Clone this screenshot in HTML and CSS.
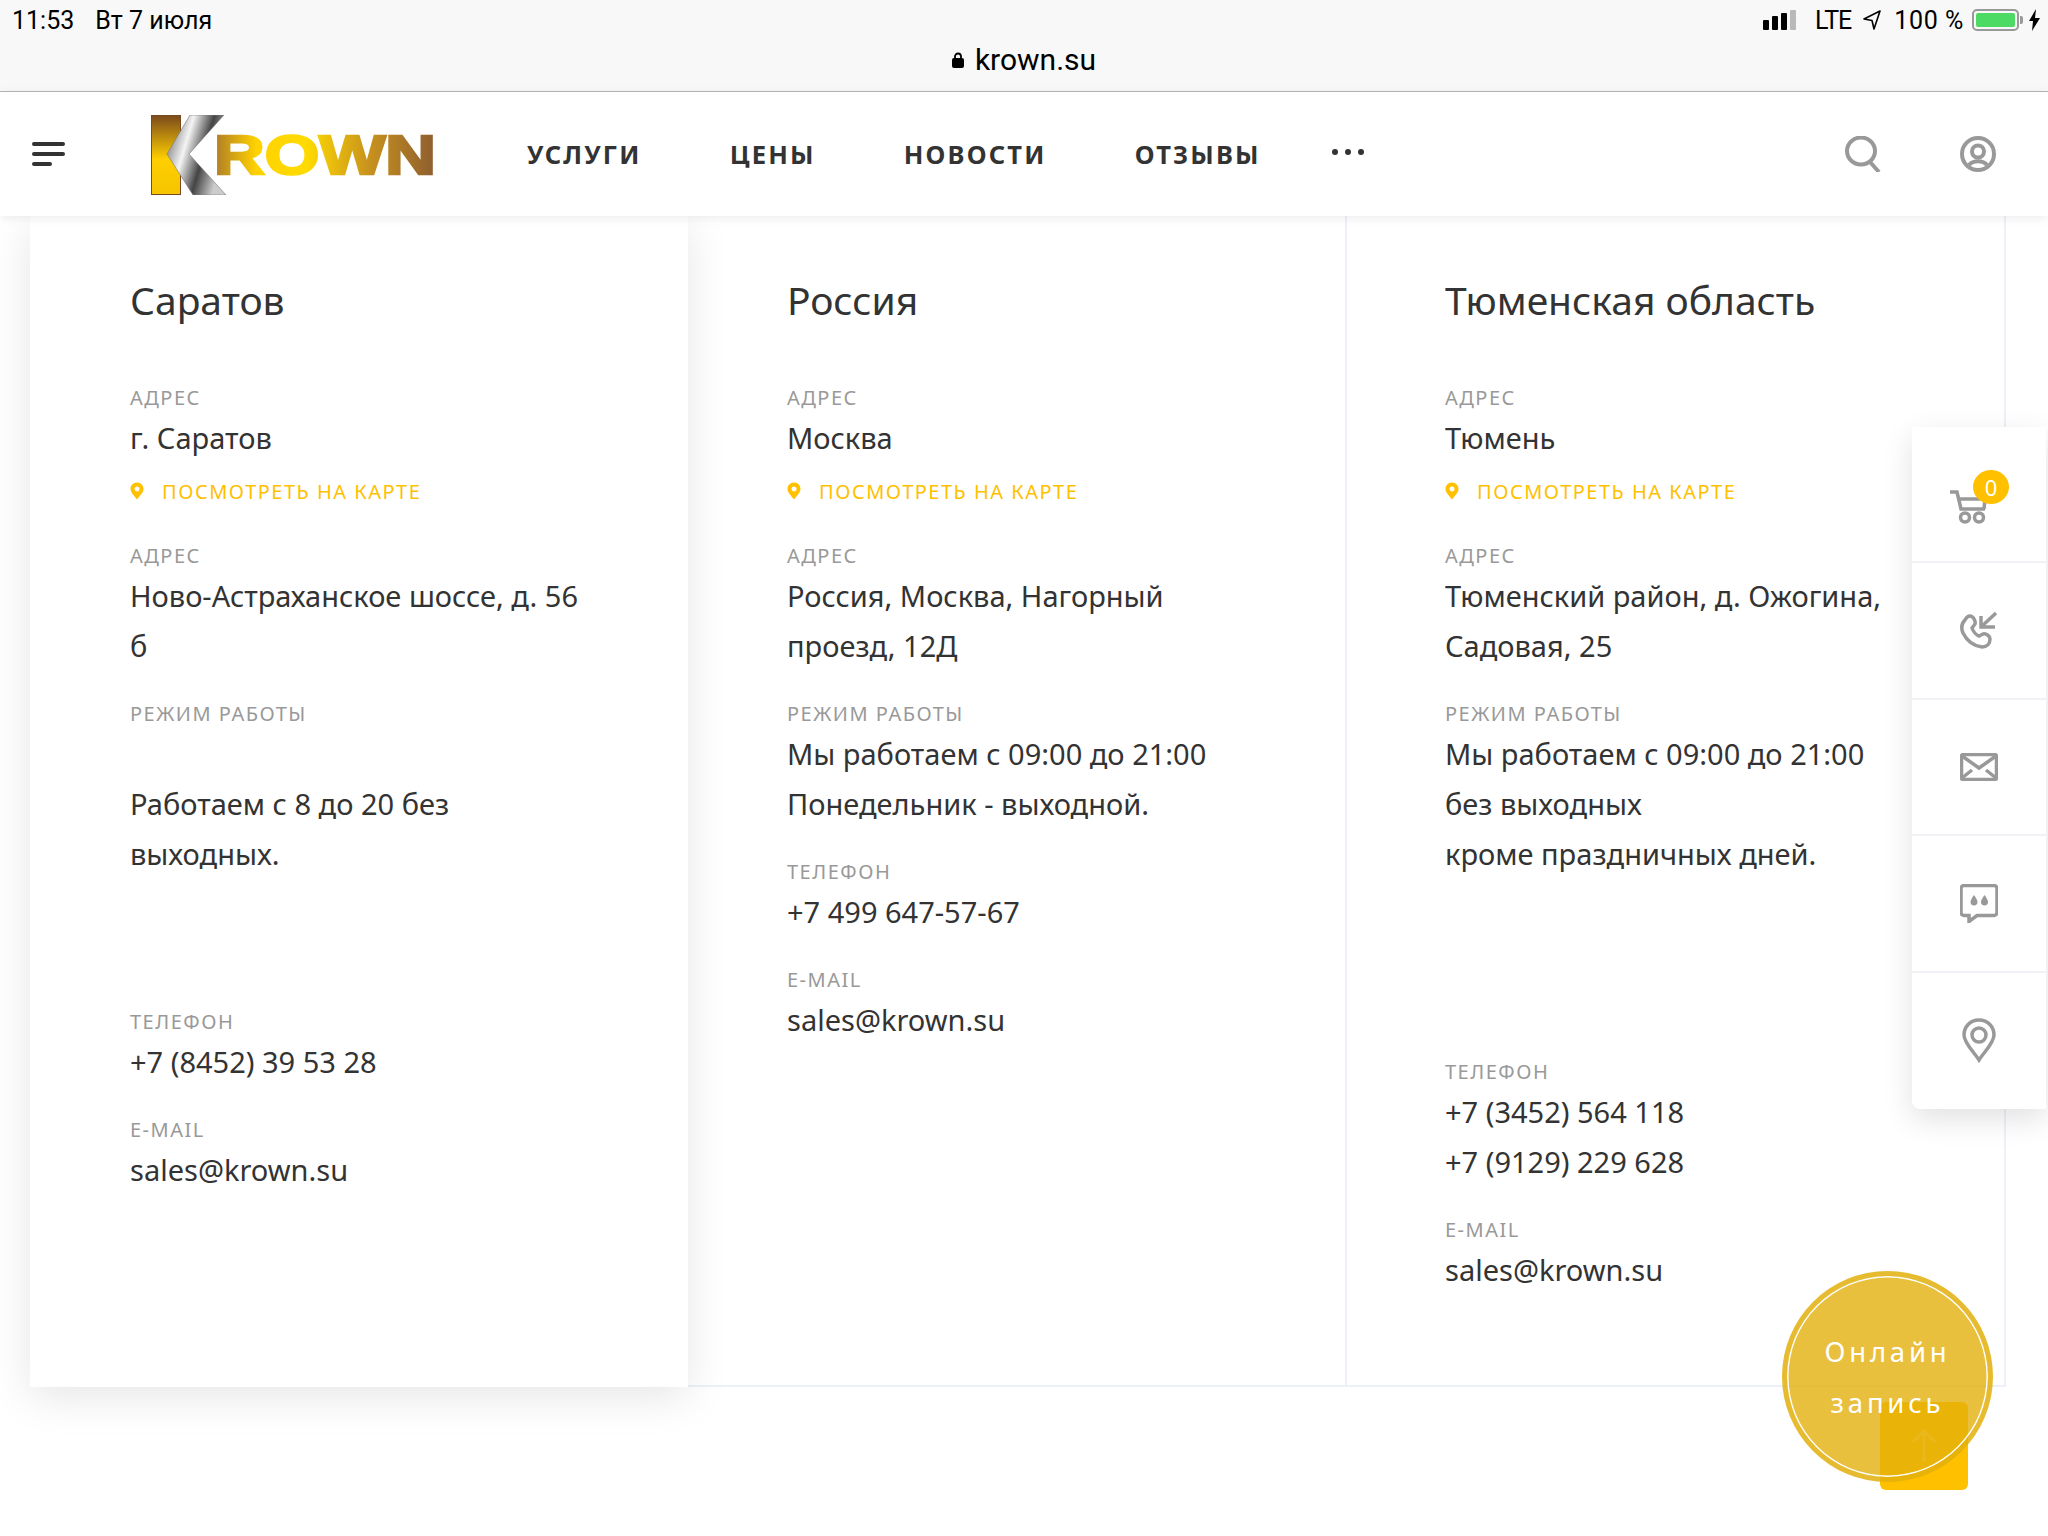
FILE: index.html
```html
<!DOCTYPE html>
<html lang="ru">
<head>
    <meta charset="UTF-8">
    <meta name="viewport" content="width=device-width, initial-scale=1.0">
    <title>Контакты - Krown</title>
    <link rel="stylesheet" href="styles.css">
</head>
<body>
    <div class="browser-bar">
        <div class="status-row">
            <span class="status-time">11:53</span>
            <span class="status-date">Вт 7 июля</span>
            <div class="status-right">
                <div class="signal"><i></i><i></i><i></i><i class="off"></i></div>
                <span class="status-lte">LTE</span>
                <svg class="status-arrow" width="18" height="20" viewBox="0 0 18 20"><path d="M17 1L1 9l8 1.5L11 19z" fill="none" stroke="#000" stroke-width="1.6" stroke-linejoin="round"/></svg>
                <span class="status-pct">100 %</span>
                <div class="battery"><div class="battery-fill"></div></div>
                <div class="battery-tip"></div>
                <svg class="status-bolt" width="11" height="22" viewBox="0 0 11 22"><path d="M7 0L0 12h4l-1 10 8-13H6z" fill="#000"/></svg>
            </div>
        </div>
        <div class="url-row">
            <svg width="12" height="16" viewBox="0 0 12 16"><path d="M3 7V4.500a3 3 0 0 1 6 0V7" fill="none" stroke="#000" stroke-width="1.800"/><rect x="0" y="6" width="12" height="10" rx="2" fill="#000"/></svg>
            <span>krown.su</span>
        </div>
    </div>

    <header class="site-header">
        <div class="burger"><i></i><i></i><i class="short"></i></div>
        <svg class="logo" width="286" height="80" viewBox="0 0 286 80">
            <defs>
                <linearGradient id="barGold" x1="0" y1="0" x2="0" y2="1">
                    <stop offset="0" stop-color="#7a4a1c"/>
                    <stop offset="0.55" stop-color="#ffcf00"/>
                    <stop offset="1" stop-color="#f5c400"/>
                </linearGradient>
                <linearGradient id="silver" x1="0" y1="0" x2="1" y2="0.4">
                    <stop offset="0" stop-color="#555"/>
                    <stop offset="0.4" stop-color="#f4f4f4"/>
                    <stop offset="0.7" stop-color="#444"/>
                    <stop offset="1" stop-color="#ccc"/>
                </linearGradient>
                <linearGradient id="wordGold" gradientUnits="userSpaceOnUse" x1="60" y1="0" x2="286" y2="0">
                    <stop offset="0" stop-color="#a8752a"/>
                    <stop offset="0.2" stop-color="#ffd200"/>
                    <stop offset="0.42" stop-color="#ffdb00"/>
                    <stop offset="0.7" stop-color="#c8921e"/>
                    <stop offset="1" stop-color="#8c5c30"/>
                </linearGradient>
            </defs>
            <rect x="0.500" y="0.500" width="29" height="79" fill="url(#barGold)" stroke="#7a4a1c"/>
            <polygon points="39,0 73,0 38,39 75,80 42,80 16,39" fill="url(#silver)" stroke="#777" stroke-width="0.600"/>
            <text class="logo-word" x="63" y="59" textLength="222" lengthAdjust="spacingAndGlyphs" fill="url(#wordGold)" stroke="url(#wordGold)" stroke-width="2.600">ROWN</text>
        </svg>
        <nav class="main-nav">
            <a>УСЛУГИ</a>
            <a>ЦЕНЫ</a>
            <a>НОВОСТИ</a>
            <a>ОТЗЫВЫ</a>
            <div class="nav-dots"><i></i><i></i><i></i></div>
        </nav>
        <div class="header-icons">
            <svg width="36" height="36" viewBox="0 0 36 36" fill="none" stroke="#999" stroke-width="4"><ellipse cx="16" cy="15" rx="14" ry="13.500"/><path d="M25 26l9 10"/></svg>
            <svg width="36" height="36" viewBox="0 0 36 36" fill="none" stroke="#999" stroke-width="4"><circle cx="18" cy="18" r="16"/><circle cx="18" cy="15.500" r="6"/><path d="M9 29c4-5 14-5 18 0"/></svg>
        </div>
    </header>

    <main class="offices">
        <section class="office office-active">
            <h2>Саратов</h2>
            <div class="field">
                <div class="field-label">Адрес</div>
                <div class="field-value">г. Саратов</div>
                <a class="map-link"><svg width="14" height="18" viewBox="0 0 14 18"><path d="M7 .500C3 .500 .500 3.500 .500 7c0 3.500 4 7 6.500 10.500C9.500 14 13.500 10.500 13.500 7 13.500 3.500 11 .500 7 .500zm0 4a2.500 2.500 0 1 1 0 5 2.500 2.500 0 0 1 0-5z" fill="#ffc000"/></svg>Посмотреть на карте</a>
            </div>
            <div class="field">
                <div class="field-label">Адрес</div>
                <div class="field-value">Ново-Астраханское шоссе, д. 56<br>б</div>
            </div>
            <div class="field">
                <div class="field-label">Режим работы</div>
                <div class="field-value"><br>Работаем с 8 до 20 без<br>выходных.<br><br><br></div>
            </div>
            <div class="field">
                <div class="field-label">Телефон</div>
                <div class="field-value">+7 (8452) 39 53 28</div>
            </div>
            <div class="field">
                <div class="field-label">E-mail</div>
                <div class="field-value">sales@krown.su</div>
            </div>
        </section>

        <section class="office">
            <h2>Россия</h2>
            <div class="field">
                <div class="field-label">Адрес</div>
                <div class="field-value">Москва</div>
                <a class="map-link"><svg width="14" height="18" viewBox="0 0 14 18"><path d="M7 .500C3 .500 .500 3.500 .500 7c0 3.500 4 7 6.500 10.500C9.500 14 13.500 10.500 13.500 7 13.500 3.500 11 .500 7 .500zm0 4a2.500 2.500 0 1 1 0 5 2.500 2.500 0 0 1 0-5z" fill="#ffc000"/></svg>Посмотреть на карте</a>
            </div>
            <div class="field">
                <div class="field-label">Адрес</div>
                <div class="field-value">Россия, Москва, Нагорный<br>проезд, 12Д</div>
            </div>
            <div class="field">
                <div class="field-label">Режим работы</div>
                <div class="field-value">Мы работаем с 09:00 до 21:00<br>Понедельник - выходной.</div>
            </div>
            <div class="field">
                <div class="field-label">Телефон</div>
                <div class="field-value">+7 499 647-57-67</div>
            </div>
            <div class="field">
                <div class="field-label">E-mail</div>
                <div class="field-value">sales@krown.su</div>
            </div>
        </section>

        <section class="office office-last">
            <h2>Тюменская область</h2>
            <div class="field">
                <div class="field-label">Адрес</div>
                <div class="field-value">Тюмень</div>
                <a class="map-link"><svg width="14" height="18" viewBox="0 0 14 18"><path d="M7 .500C3 .500 .500 3.500 .500 7c0 3.500 4 7 6.500 10.500C9.500 14 13.500 10.500 13.500 7 13.500 3.500 11 .500 7 .500zm0 4a2.500 2.500 0 1 1 0 5 2.500 2.500 0 0 1 0-5z" fill="#ffc000"/></svg>Посмотреть на карте</a>
            </div>
            <div class="field">
                <div class="field-label">Адрес</div>
                <div class="field-value">Тюменский район, д. Ожогина,<br>Садовая, 25</div>
            </div>
            <div class="field">
                <div class="field-label">Режим работы</div>
                <div class="field-value">Мы работаем с 09:00 до 21:00<br>без выходных<br>кроме праздничных дней.<br><br><br><br></div>
            </div>
            <div class="field">
                <div class="field-label">Телефон</div>
                <div class="field-value">+7 (3452) 564 118<br>+7 (9129) 229 628</div>
            </div>
            <div class="field">
                <div class="field-label">E-mail</div>
                <div class="field-value">sales@krown.su</div>
            </div>
        </section>
    </main>

    <aside class="side-panel">
        <div class="side-item">
            <div class="cart">
                <svg width="38" height="34" viewBox="0 0 38 34" fill="none" stroke="#999" stroke-width="3.500"><path d="M1 2h7l4 17h24"/><path d="M9 9h27l-1 10"/><circle cx="16" cy="27.500" r="4.500"/><circle cx="30" cy="27.500" r="4.500"/></svg>
                <span class="cart-badge">0</span>
            </div>
        </div>
        <div class="side-item">
            <svg width="38" height="38" viewBox="0 0 38 38" fill="none" stroke="#999" stroke-width="3.500"><path d="M5 8C2 11 .500 15 3 21c4 8 11 13 19 14 5 0 8-3 8-8 0-3-4-6-7-5l-4 2c-3-1-6-5-7-8l3-4c1-3-2-8-5-8-2 0-4 2-5 4z"/><path d="M21 4v11h14M21 15L36 1"/></svg>
        </div>
        <div class="side-item">
            <svg width="38" height="28" viewBox="0 0 38 28" fill="none" stroke="#999" stroke-width="3.500"><rect x="1.500" y="1.500" width="35" height="25" rx="2"/><path d="M2 3l17 12L36 3M2 25l10-8M36 25l-10-8"/></svg>
        </div>
        <div class="side-item">
            <svg width="38" height="39" viewBox="0 0 38 39"><path d="M4 1.500h30a3 3 0 0 1 3 3v24a3 3 0 0 1-3 3H17l-8 6v-6H4a3 3 0 0 1-3-3v-24a3 3 0 0 1 3-3z" fill="none" stroke="#999" stroke-width="3.500"/><path d="M14 11c-2 3-3.500 5-3.500 7a3.500 3.500 0 0 0 7 0c0-2-1.500-4-3.500-7zM24.500 11c-2 3-3.500 5-3.500 7a3.500 3.500 0 0 0 7 0c0-2-1.500-4-3.500-7z" fill="#999"/></svg>
        </div>
        <div class="side-item">
            <svg width="34" height="45" viewBox="0 0 34 45" fill="none" stroke="#999" stroke-width="3.500"><path d="M17 2C8 2 2 9 2 17c0 8 10 17 15 25 5-8 15-17 15-25 0-8-6-15-15-15z"/><circle cx="17" cy="17" r="7"/></svg>
        </div>
    </aside>

    <a class="to-top">
        <svg width="26" height="34" viewBox="0 0 26 34" fill="none" stroke="#fff" stroke-width="3"><path d="M13 33V2M2 13L13 2l11 11"/></svg>
    </a>
    <a class="online-booking">Онлайн<br>запись</a>
</body>
</html>
```

FILE: styles.css
```css
* {
    box-sizing: border-box;
}

body {
    margin: 0;
    height: 1536px;
    overflow: hidden;
    background-color: #fff;
    font-family: "Noto Sans", "Open Sans", sans-serif;
    color: #333;
}

/* ipad safari bar */
.browser-bar {
    height: 92px;
    background-color: #f8f8f8;
    border-bottom: 1px solid #b5b5b5;
    font-family: Roboto, sans-serif;
    color: #000;
}

.status-row {
    display: flex;
    align-items: center;
    height: 40px;
    padding: 0 8px 0 12px;
    font-size: 25px;
}

.status-date {
    margin-left: 21px;
}

.status-right {
    display: flex;
    align-items: center;
    margin-left: auto;
}

.signal {
    display: flex;
    align-items: flex-end;
    gap: 3px;
    height: 20px;
    margin-right: 19px;
}

.signal i {
    width: 6px;
    border-radius: 1px;
    background-color: #000;
    height: 10px;
}

.signal i:nth-child(2) {
    height: 14px;
}

.signal i:nth-child(3) {
    height: 17px;
}

.signal i.off {
    height: 20px;
    background-color: #b9b9b9;
}

.status-lte {
    letter-spacing: -1px;
}

.status-arrow {
    margin: 0 13px 0 12px;
}

.status-pct {
    letter-spacing: 0.600px;
}

.battery {
    width: 47px;
    height: 22px;
    margin-left: 8px;
    padding: 2px;
    border: 2px solid #999;
    border-radius: 5px;
}

.battery-fill {
    height: 100%;
    border-radius: 2px;
    background-color: #4cd964;
}

.battery-tip {
    width: 3px;
    height: 8px;
    margin-left: 1px;
    border-radius: 0 2px 2px 0;
    background-color: #999;
}

.status-bolt {
    margin-left: 6px;
}

.url-row {
    display: flex;
    justify-content: center;
    align-items: center;
    gap: 11px;
    height: 39px;
    font-size: 30px;
}

/* header */
.site-header {
    position: relative;
    z-index: 3;
    display: flex;
    align-items: center;
    height: 124px;
    padding: 0 34px 0 32px;
    background-color: #fff;
    box-shadow: 0 2px 10px rgba(0, 0, 0, 0.08);
}

.burger {
    display: flex;
    flex-direction: column;
    gap: 6px;
    width: 33px;
    margin-top: -1px;
}

.burger i {
    height: 4px;
    border-radius: 2px;
    background-color: #333;
}

.burger i.short {
    width: 20px;
}

.logo {
    margin-top: 2px;
    margin-left: 86px;
}

.logo-word {
    font-family: "Liberation Sans", sans-serif;
    font-weight: bold;
    font-size: 56px;
}

.main-nav {
    display: flex;
    align-items: center;
    gap: 88px;
    margin-top: -1px;
    margin-left: 90px;
    font-size: 25.500px;
    font-weight: 700;
    letter-spacing: 2.200px;
    color: #333;
}

.nav-dots {
    display: flex;
    gap: 7px;
    margin-left: -17px;
    margin-top: -3px;
}

.nav-dots i {
    width: 6px;
    height: 6px;
    border-radius: 50%;
    background-color: #333;
}

.header-icons {
    display: flex;
    align-items: center;
    gap: 79px;
    margin-left: auto;
    margin-right: 18px;
}

/* office columns */
.offices {
    display: grid;
    grid-template-columns: 658px 659px 659px;
    width: 2006px;
    margin-left: 30px;
}

.office {
    height: 1171px;
    padding: 59px 40px 0 99px;
    border-right: 2px solid #edf1f7;
    border-bottom: 2px solid #edf1f7;
    background-color: #fff;
}

.office-active {
    position: relative;
    z-index: 1;
    padding-left: 100px;
    border-color: transparent;
    box-shadow: 0 10px 40px rgba(0, 0, 0, 0.1);
}

.office-last {
    padding-left: 98px;
}

.office h2 {
    margin: 0 0 55px;
    font-size: 39px;
    line-height: 50px;
    font-weight: 400;
    color: #333;
}

.field {
    margin-bottom: 25px;
}

.field-label {
    height: 33px;
    font-size: 20px;
    line-height: 36px;
    letter-spacing: 1.500px;
    text-transform: uppercase;
    color: #999;
}

.field-value {
    font-size: 29px;
    line-height: 50px;
    color: #333;
}

.map-link {
    display: flex;
    align-items: center;
    gap: 18px;
    height: 30px;
    margin-top: 13px;
    margin-bottom: 32px;
    font-size: 20px;
    letter-spacing: 1.500px;
    text-transform: uppercase;
    color: #ffc000;
}

/* floating stuff */
.side-panel {
    position: absolute;
    top: 427px;
    right: 2px;
    z-index: 2;
    width: 134px;
    border-bottom-left-radius: 8px;
    background-color: #fff;
    box-shadow: 0 10px 30px rgba(0, 0, 0, 0.12);
}

.side-item {
    display: flex;
    justify-content: center;
    align-items: center;
    height: 136.400px;
    border-bottom: 2px solid #f0f2f6;
}

.side-item:last-child {
    border-bottom: none;
}

.cart {
    position: relative;
    display: flex;
    margin: 26px 22px 0 0;
}

.cart-badge {
    position: absolute;
    top: -20px;
    right: -22px;
    width: 36px;
    height: 34px;
    border-radius: 50%;
    background-color: #ffc000;
    color: #fff;
    font-size: 22px;
    line-height: 34px;
    text-align: center;
}

.to-top {
    position: absolute;
    left: 1880px;
    top: 1402px;
    z-index: 2;
    display: flex;
    justify-content: center;
    align-items: center;
    width: 88px;
    height: 88px;
    border-radius: 6px;
    background-color: #ffc000;
}

.to-top svg {
    opacity: 0.4;
}

.online-booking {
    position: absolute;
    left: 1782px;
    top: 1271px;
    z-index: 2;
    display: flex;
    justify-content: center;
    align-items: center;
    width: 211px;
    height: 211px;
    border: 5px solid rgba(227, 175, 10, 0.85);
    border-radius: 50%;
    background-color: rgba(227, 175, 10, 0.79);
    background-clip: padding-box;
    box-shadow: inset 0 0 0 1.500px #fff;
    font-size: 27.500px;
    line-height: 51px;
    letter-spacing: 3.800px;
    text-align: center;
    color: #fff;
}
```
